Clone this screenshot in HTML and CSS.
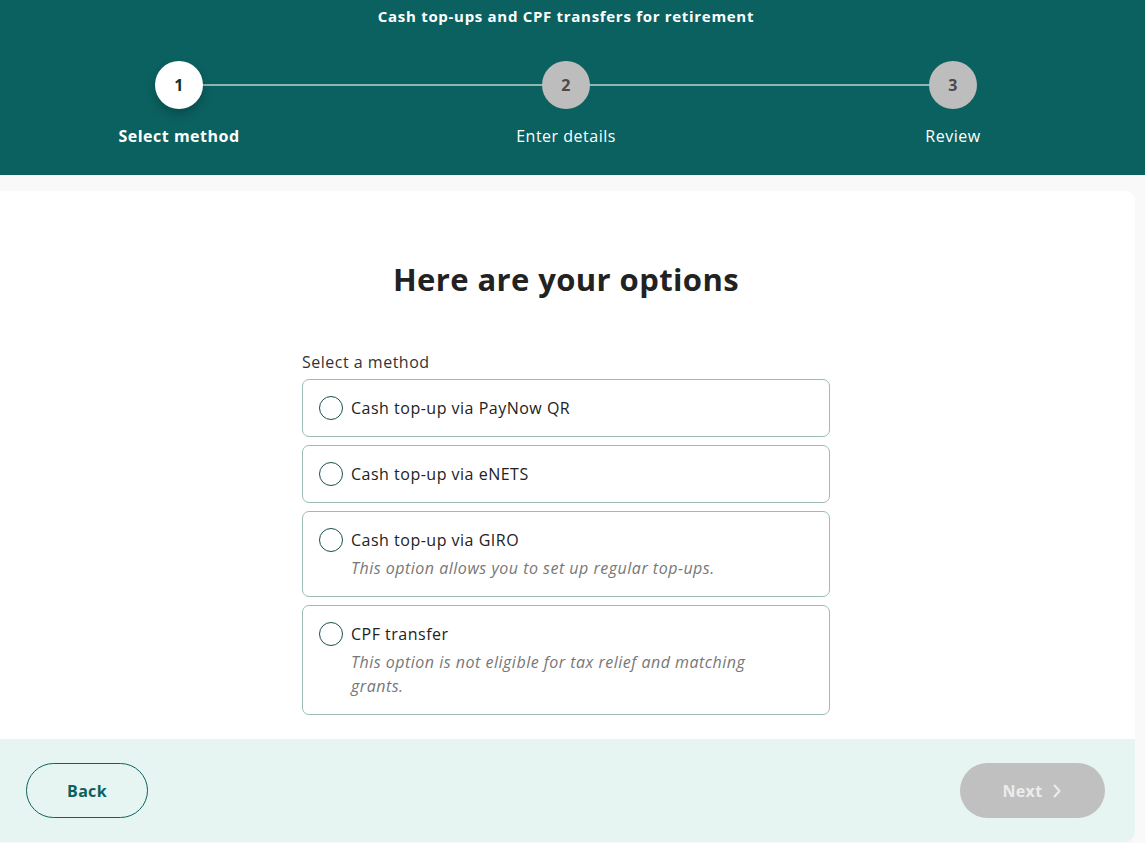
FILE: index.html
```html
<!DOCTYPE html>
<html lang="en">
<head>
<meta charset="utf-8">
<title>Cash top-ups and CPF transfers for retirement</title>
<link rel="stylesheet" href="styles.css">
</head>
<body>
<header class="masthead">
  <div class="masthead-inner">
    <h1 class="masthead-title">Cash top-ups and CPF transfers for retirement</h1>
    <ol class="stepper">
      <li class="step step-active">
        <span class="step-circle">1</span>
        <span class="step-label">Select method</span>
      </li>
      <li class="step">
        <span class="step-circle">2</span>
        <span class="step-label">Enter details</span>
      </li>
      <li class="step">
        <span class="step-circle">3</span>
        <span class="step-label">Review</span>
      </li>
    </ol>
  </div>
</header>

<main class="page">
  <section class="card">
    <div class="card-body">
      <h2 class="card-heading">Here are your options</h2>
      <fieldset class="method-group">
        <legend class="method-legend">Select a method</legend>
        <div class="option-list">
          <label class="option">
            <input type="radio" name="method" class="option-input">
            <span class="radio"></span>
            <span class="option-text">
              <span class="option-title">Cash top-up via PayNow QR</span>
            </span>
          </label>
          <label class="option">
            <input type="radio" name="method" class="option-input">
            <span class="radio"></span>
            <span class="option-text">
              <span class="option-title">Cash top-up via eNETS</span>
            </span>
          </label>
          <label class="option">
            <input type="radio" name="method" class="option-input">
            <span class="radio"></span>
            <span class="option-text">
              <span class="option-title">Cash top-up via GIRO</span>
              <span class="option-desc">This option allows you to set up regular top-ups.</span>
            </span>
          </label>
          <label class="option">
            <input type="radio" name="method" class="option-input">
            <span class="radio"></span>
            <span class="option-text">
              <span class="option-title">CPF transfer</span>
              <span class="option-desc option-desc-narrow">This option is not eligible for tax relief and matching grants.</span>
            </span>
          </label>
        </div>
      </fieldset>
    </div>
    <div class="card-footer">
      <button class="btn btn-back" type="button">Back</button>
      <button class="btn btn-next" type="button" disabled>
        Next
        <svg class="chev" width="10" height="14" viewBox="0 0 10 14" aria-hidden="true"><path d="M2.5 1.5 L7.5 7 L2.5 12.5" fill="none" stroke="currentColor" stroke-width="2" stroke-linecap="round" stroke-linejoin="round"/></svg>
      </button>
    </div>
  </section>
</main>
</body>
</html>
```

FILE: styles.css
```css
* { box-sizing: border-box; }

html, body {
  margin: 0;
  padding: 0;
}

body {
  font-family: "Open Sans", "Noto Sans", Arial, sans-serif;
  background: #f9f9f9;
  color: #222;
  letter-spacing: 0.5px;
}

.masthead {
  background: #0b6160;
  height: 175px;
  padding-top: 6px;
  color: #fff;
}

.masthead-inner {
  width: 1132px;
}

.masthead-title {
  margin: 0;
  text-align: center;
  font-size: 15px;
  line-height: 20px;
  font-weight: 700;
  letter-spacing: 0.7px;
}

.stepper {
  list-style: none;
  margin: 35px auto 0;
  padding: 0;
  width: 894px;
  display: flex;
  justify-content: space-between;
  position: relative;
}

.stepper::before {
  content: "";
  position: absolute;
  left: 60px;
  right: 60px;
  top: 23px;
  height: 2px;
  background: #8db7b3;
}

.step {
  width: 120px;
  display: flex;
  flex-direction: column;
  align-items: center;
  position: relative;
}

.step-circle {
  width: 48px;
  height: 48px;
  border-radius: 50%;
  background: #bdbdbd;
  color: #4a4a4a;
  font-weight: 700;
  font-size: 16px;
  display: flex;
  align-items: center;
  justify-content: center;
  position: relative;
}

.step-active .step-circle {
  background: #fff;
  color: #12302f;
  box-shadow: 0 5px 10px rgba(0, 0, 0, 0.22);
}

.step-label {
  margin-top: 17px;
  font-size: 16px;
  line-height: 20px;
  white-space: nowrap;
  color: #fff;
}

.step-active .step-label {
  font-weight: 700;
}

.page {
  padding-top: 16px;
}

.card {
  width: 1135px;
  background: #fff;
  border-radius: 0 10px 10px 0;
  overflow: hidden;
}

.card-body {
  padding: 68px 3px 24px 0;
}

.card-heading {
  margin: 0;
  text-align: center;
  font-size: 31px;
  line-height: 40px;
  font-weight: 700;
  color: #222;
  letter-spacing: 0.4px;
}

.method-group {
  border: 0;
  margin: 51px auto 0;
  padding: 0;
  width: 528px;
  min-width: 0;
}

.method-legend {
  padding: 0;
  font-size: 16px;
  line-height: 24px;
  color: #333;
  margin-bottom: 5px;
  float: left;
}

.option-list {
  clear: both;
  display: flex;
  flex-direction: column;
  gap: 8px;
}

.option {
  display: flex;
  align-items: flex-start;
  gap: 8px;
  padding: 16px;
  border: 1px solid #9dbbb7;
  border-radius: 7px;
  cursor: pointer;
}

.option-input {
  position: absolute;
  opacity: 0;
  width: 0;
  height: 0;
}

.radio {
  flex: none;
  width: 24px;
  height: 24px;
  border: 1.5px solid #17504d;
  border-radius: 50%;
}

.option-text {
  display: flex;
  flex-direction: column;
  gap: 4px;
}

.option-title {
  font-size: 16px;
  line-height: 24px;
  color: #222;
}

.option-desc {
  font-size: 16px;
  line-height: 24px;
  font-style: italic;
  color: #777;
}

.option-desc-narrow {
  max-width: 430px;
}

.card-footer {
  background: #e7f5f2;
  padding: 24px 30px 24px 26px;
  display: flex;
  justify-content: space-between;
  align-items: center;
}

.btn {
  height: 55px;
  border-radius: 28px;
  font-family: inherit;
  font-size: 16px;
  font-weight: 700;
  letter-spacing: 0.3px;
  display: inline-flex;
  align-items: center;
  justify-content: center;
  gap: 10px;
}

.btn-back {
  width: 122px;
  background: transparent;
  border: 1px solid #0b6160;
  color: #0b6160;
}

.btn-next {
  width: 145px;
  background: #c0c0c0;
  border: 0;
  color: #ececec;
}

.chev {
  display: block;
}
```
